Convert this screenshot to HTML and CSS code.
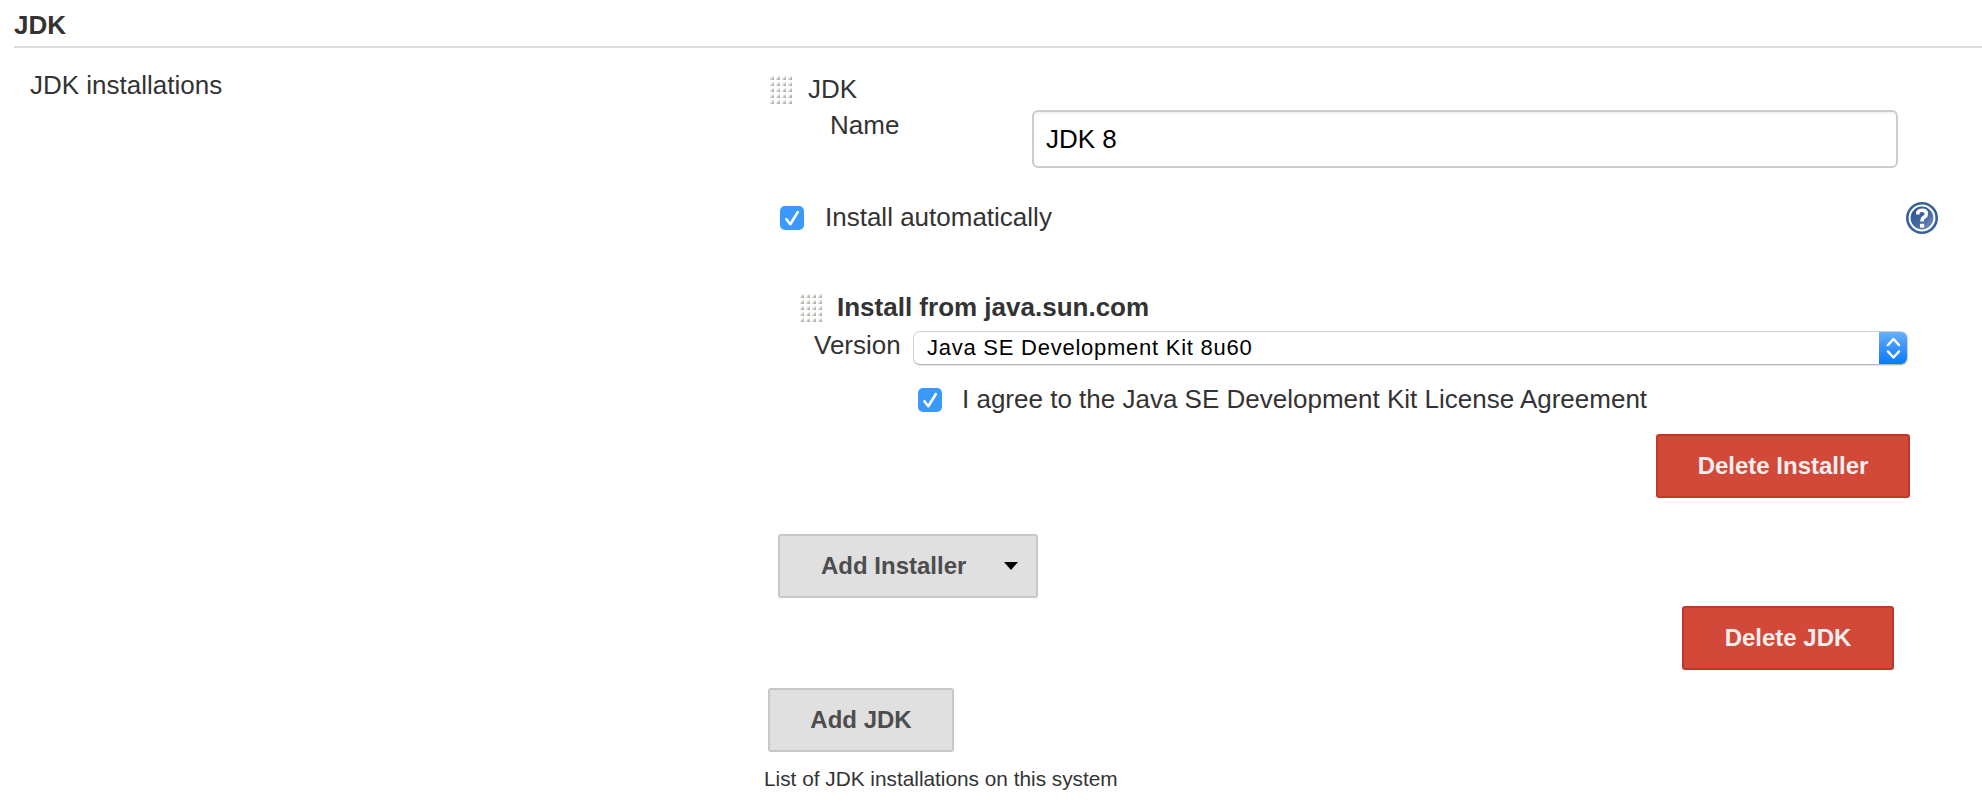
FILE: index.html
```html
<!DOCTYPE html>
<html lang="en">
<head>
<meta charset="utf-8">
<title>JDK</title>
<link rel="stylesheet" href="styles.css">
</head>
<body>
<svg class="defs" width="0" height="0" aria-hidden="true">
  <defs>
    <linearGradient id="dot" x1="0" y1="0" x2="1" y2="1"><stop offset="0.3" stop-color="#fafaf8"/><stop offset="0.9" stop-color="#9a9a94"/></linearGradient>
    <pattern id="dots" width="6" height="6" patternUnits="userSpaceOnUse"><rect width="4" height="4" rx="0.8" fill="url(#dot)"/></pattern>
    <linearGradient id="globe" x1="0" y1="0" x2="1" y2="1"><stop offset="0" stop-color="#24508f"/><stop offset="0.55" stop-color="#43699f"/><stop offset="1" stop-color="#87a3ca"/></linearGradient>
    <symbol id="handle" viewBox="0 0 22 28"><rect width="22" height="28" fill="url(#dots)"/></symbol>
    <symbol id="checked" viewBox="0 0 24 24"><rect width="24" height="24" rx="5" fill="#3b99fc"/><path d="M6.400 13.200l3.900 5 7.400-12" fill="none" stroke="#fff" stroke-width="2.600" stroke-linecap="round" stroke-linejoin="round"/></symbol>
  </defs>
</svg>
<main class="section">
  <h1 class="section-title">JDK</h1>
  <div class="section-body">
    <div class="setting-name">JDK installations</div>
    <div class="setting-main">
      <div class="chunk-header">
        <svg class="handle" width="22" height="28"><use href="#handle"/></svg>
        <span>JDK</span>
      </div>
      <div class="name-row">
        <label for="name">Name</label>
        <input id="name" class="text-input" type="text" value="JDK 8">
      </div>
      <div class="auto-row">
        <svg class="check" width="24" height="24"><use href="#checked"/></svg>
        <span class="auto-label">Install automatically</span>
        <svg class="help" width="32" height="32" viewBox="0 0 32 32">
          <circle cx="16" cy="16" r="16" fill="#375f9c"/>
          <circle cx="16" cy="16" r="12.4" fill="url(#globe)" stroke="#fff" stroke-width="2"/>
          <path d="M11.900 12.600V10.400Q13 8.200 16 8.200Q20.400 8.200 20.400 11.700Q20.400 13.800 18.100 15.200Q16 16.500 16 19.400" fill="none" stroke="#fff" stroke-width="3.600"/>
          <rect x="14" y="21.800" width="4.200" height="3.800" fill="#fff"/>
        </svg>
      </div>
      <div class="installer-header">
        <svg class="handle" width="22" height="28"><use href="#handle"/></svg>
        <span>Install from java.sun.com</span>
      </div>
      <div class="version-row">
        <span class="version-label">Version</span>
        <div class="select">
          <span class="select-value">Java SE Development Kit 8u60</span>
          <svg class="select-arrows" width="29" height="34" viewBox="0 0 29 34"><path d="M9 14l5.500-6 5.500 6M9 20.500l5.500 6 5.500-6" fill="none" stroke="#fff" stroke-width="2.500" stroke-linecap="round" stroke-linejoin="round"/></svg>
        </div>
      </div>
      <div class="agree-row">
        <svg class="check" width="24" height="24"><use href="#checked"/></svg>
        <span>I agree to the Java SE Development Kit License Agreement</span>
      </div>
      <button class="button danger delete-installer" type="button">Delete Installer</button>
      <button class="button add-installer" type="button"><span>Add Installer</span><svg width="14" height="8" viewBox="0 0 14 8"><path d="M0 0h14L7 8z"/></svg></button>
      <button class="button danger delete-jdk" type="button">Delete JDK</button>
      <button class="button add-jdk" type="button">Add JDK</button>
      <p class="description">List of JDK installations on this system</p>
    </div>
  </div>
</main>
</body>
</html>
```
FILE: styles.css
```css
* { box-sizing: border-box; }
body {
  margin: 0;
  background: #fff;
  color: #333;
  font: 26px/30px "Liberation Sans", Arial, Helvetica, sans-serif;
  overflow: hidden;
}
svg { display: block; flex: none; }
.defs { position: absolute; }
.section { padding: 10px 0 0 14px; }
.section-title {
  margin: 0;
  height: 38px;
  border-bottom: 2px solid #ddd;
  font-size: 26px;
  line-height: 30px;
}
.section-body {
  display: grid;
  grid-template-columns: 750px 1fr;
}
.setting-name { padding: 22px 0 0 16px; }
.setting-main {
  display: flex;
  flex-direction: column;
  padding-top: 26px;
}
.chunk-header {
  display: flex;
  gap: 16px;
  height: 36px;
  padding-left: 6px;
}
.handle { margin-top: 2px; }
.name-row {
  display: grid;
  grid-template-columns: 202px 866px;
  height: 58px;
  padding-left: 66px;
}
.text-input {
  height: 58px;
  padding: 0 12px;
  border: 2px solid #ccc;
  border-radius: 6px;
  outline: 0;
  background: #fff;
  box-shadow: inset 0 2px 2px rgba(0, 0, 0, 0.05);
  color: #000;
  font: inherit;
}
.auto-row {
  display: flex;
  align-items: center;
  height: 32px;
  margin-top: 34px;
  padding: 0 44px 0 16px;
}
.auto-label {
  flex: 1;
  margin-left: 21px;
  padding-bottom: 2px;
}
.installer-header {
  display: flex;
  gap: 15px;
  height: 38px;
  margin-top: 58px;
  padding-left: 36px;
  font-weight: bold;
}
.version-row {
  display: flex;
  height: 36px;
  padding-left: 50px;
}
.version-label { width: 99px; }
.select {
  display: flex;
  width: 995px;
  height: 34px;
  margin-top: 1px;
  overflow: hidden;
  border: 1px solid #d2d2d2;
  border-bottom-color: #b5b5b5;
  border-radius: 7px;
  box-shadow: 0 1px 1px rgba(0, 0, 0, 0.1);
  color: #000;
}
.select-value {
  flex: 1;
  padding-left: 13px;
  font-size: 22px;
  line-height: 32px;
  letter-spacing: 0.75px;
}
.select-arrows {
  margin: -1px -1px -1px 0;
  background: linear-gradient(#6bb2fb, #3793fb 50%, #047afe);
}
.agree-row {
  display: flex;
  gap: 20px;
  height: 30px;
  margin-top: 18px;
  padding-left: 154px;
}
.agree-row .check { margin-top: 4px; }
.button {
  height: 64px;
  padding: 0 42px;
  border: 2px solid #c8c8c8;
  border-radius: 3px;
  background: #e0e0e0;
  color: #4d4d4d;
  font: bold 24px/30px "Liberation Sans", Arial, Helvetica, sans-serif;
  white-space: nowrap;
}
.danger {
  align-self: flex-end;
  padding: 0;
  border-color: #c0392b;
  background: #d24939;
  color: #eee;
}
.delete-installer {
  width: 254px;
  margin: 20px 72px 0 0;
}
.add-installer {
  display: flex;
  align-items: center;
  justify-content: space-between;
  width: 260px;
  margin: 36px 0 0 14px;
  padding: 0 18px 0 41px;
}
.delete-jdk {
  width: 212px;
  margin: 8px 88px 0 0;
}
.add-jdk {
  width: 186px;
  margin: 18px 0 0 4px;
  padding: 0;
}
.description {
  margin: 12px 0 0;
  font-size: 20.8px;
}
```
